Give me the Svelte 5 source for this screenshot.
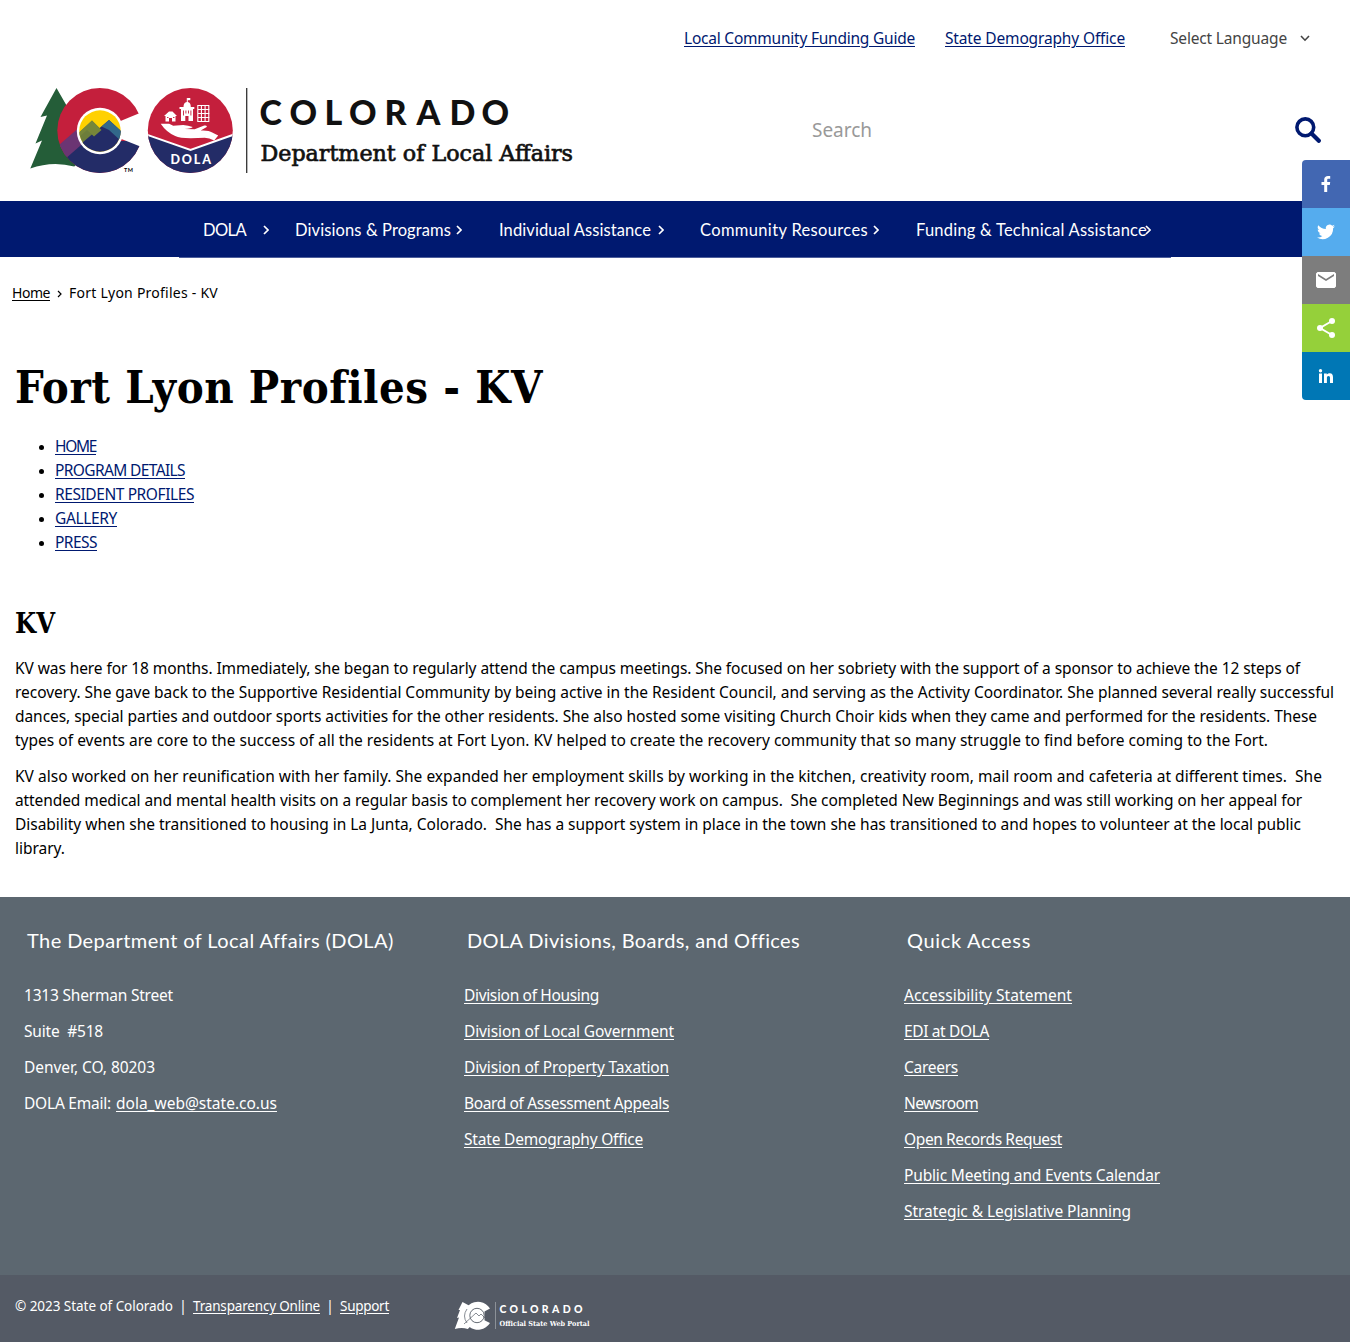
<script>
  // Spreads the letter spacing of a text run so that it spans the given width.
  function fit(node, width) {
    const range = document.createRange();
    range.selectNodeContents(node);
    const natural = range.getBoundingClientRect().width;
    node.style.letterSpacing = `${(width - natural) / node.textContent.length}px`;
  }

  const nav = [
    ['DOLA', 43, 'n1'],
    ['Divisions & Programs', 156, 'n2'],
    ['Individual Assistance', 152, 'n3'],
    ['Community Resources', 168, 'n4'],
    ['Funding & Technical Assistance', 231, 'n5']
  ];

  const pages = [
    ['HOME', 41],
    ['PROGRAM DETAILS', 130],
    ['RESIDENT PROFILES', 139],
    ['GALLERY', 62],
    ['PRESS', 42]
  ];

  const paragraphs = [
    [
      ['KV was here for 18 months. Immediately, she began to regularly attend the campus meetings. She focused on her sobriety with the support of a sponsor to achieve the 12 steps of', 1285],
      ['recovery. She gave back to the Supportive Residential Community by being active in the Resident Council, and serving as the Activity Coordinator. She planned several really successful', 1319],
      ['dances, special parties and outdoor sports activities for the other residents. She also hosted some visiting Church Choir kids when they came and performed for the residents. These', 1302],
      ['types of events are core to the success of all the residents at Fort Lyon. KV helped to create the recovery community that so many struggle to find before coming to the Fort.', 1253]
    ],
    [
      ['KV also worked on her reunification with her family. She expanded her employment skills by working in the kitchen, creativity room, mail room and cafeteria at different times.\u00a0 She', 1307],
      ['attended medical and mental health visits on a regular basis to complement her recovery work on campus.\u00a0 She completed New Beginnings and was still working on her appeal for', 1287],
      ['Disability when she transitioned to housing in La Junta, Colorado.\u00a0 She has a support system in place in the town she has transitioned to and hopes to volunteer at the local public', 1286],
      ['library.', 50]
    ]
  ];

  const address = [
    ['1313 Sherman Street', 149],
    ['Suite\u00a0 #518', 79],
    ['Denver, CO, 80203', 131]
  ];

  const divisions = [
    ['Division of Housing', 135],
    ['Division of Local Government', 210],
    ['Division of Property Taxation', 205],
    ['Board of Assessment Appeals', 205],
    ['State Demography Office', 179]
  ];

  const quick = [
    ['Accessibility Statement', 168],
    ['EDI at DOLA', 85],
    ['Careers', 54],
    ['Newsroom', 74],
    ['Open Records Request', 158],
    ['Public Meeting and Events Calendar', 256],
    ['Strategic & Legislative Planning', 227]
  ];
</script>

<div class="page">
  <header>
    <div class="topbar">
      <a href="#guide" use:fit={231}>Local Community Funding Guide</a>
      <a href="#demography" class="second" use:fit={180}>State Demography Office</a>
      <span class="language"><span use:fit={117}>Select Language</span>
        <svg width="10" height="7" viewBox="0 0 10 7"><path d="M1 1l4 4.2L9 1" fill="none" stroke="#444" stroke-width="1.6" /></svg>
      </span>
    </div>
    <div class="brand">
      <svg class="logo" width="570" height="110" viewBox="20 75 570 110">
        <defs>
          <clipPath id="disc"><circle cx="99.800" cy="130.500" r="42.500" /></clipPath>
          <clipPath id="sun"><circle cx="100" cy="131" r="20.700" /></clipPath>
          <clipPath id="seal"><circle cx="190.300" cy="130.500" r="42.500" /></clipPath>
        </defs>
        <path d="M56.500 88L40.500 117l6.500-1.500-11.500 28 6.500-3L30.300 168.500q22-8 44-2l12-12V118L68 108z" fill="#245d38" />
        <circle cx="99.800" cy="130.500" r="42.500" fill="#c41f3c" />
        <g clip-path="url(#disc)">
          <path d="M60 161.500L85 141h60v35H60z" fill="#232c67" />
          <path d="M56 147.500l22-19 6 14-19.500 17z" fill="#6b3573" />
        </g>
        <path d="M112 124.500l34-14v38.200l-34-13.500z" fill="#fff" />
        <circle cx="100" cy="131" r="23.200" fill="#fff" />
        <circle cx="100" cy="131" r="20.700" fill="#ffd100" />
        <g clip-path="url(#sun)">
          <path d="M76 135.500l16-15 9.500 9.500L87 142.500 76 152z" fill="#6d7d3b" />
          <path d="M76 148l33-28 16 14.500v22H76z" fill="#232c67" />
          <path d="M101.500 126.500l7.500-6.500 16 14.500v10l-16-14.500z" fill="#32688a" />
          <path d="M92 120.500l9.500 9.500-7.500 6.500-7-6.500-11 10v-5z" fill="#77863a" />
        </g>
        <text class="tm" x="124" y="172" textLength="9">TM</text>

        <circle cx="190.300" cy="130.500" r="42.500" fill="#c41f3c" />
        <g clip-path="url(#seal)">
          <path d="M145 134l45.500 16 45-16v45h-90z" fill="#232c67" />
          <path d="M145 134l45.500 16 45-16" fill="none" stroke="#fff" stroke-width="2" />
        </g>
        <path d="M160.700 123.700h8.500l4 2 10-.7q5 .3 9.500 2-1 1.500-8.500 2l10.500.3 9.500-3.800q3.500-.5 2.500 1.500l-6 3.500q8-.5 11.500 2l6 3-4 5q-5-2.500-9.500-2.700l-14 .4q-11 0-15.500-2.200-9-4-14.500-12.300z" fill="#fff" />
        <path d="M165.500 121.500V116H164l5-4.500h3.500l4.500 4.500h-1.500v5.500H172v-3.500h-3v3.500zM181 121v-12h-1.500v-2h4q0-4.500 3.300-5V98h1v4q3 .5 3 5h3.500v2H193v12h-4.500v-5h-3.200v5z" fill="#fff" />
        <path d="M187.300 98h3v2.200h-3z" fill="#fff" />
        <path d="M183.500 110.500v5m2.400-5v3m2.600-3v3m2.400-3v5M167 117.500h1.500m4.500 0h1.500" stroke="#c41f3c" stroke-width=".9" />
        <path d="M197.800 105.500h11v16h-11zM201.400 105v16.500M205.100 105v16.500M197.500 109.500h12M197.500 113.500h12M197.500 117.500h12" fill="none" stroke="#fff" stroke-width="1.100" />
        <text class="dola" x="170.500" y="164" textLength="40.500">DOLA</text>
        <path d="M246.700 88v85" stroke="#333" stroke-width="1.300" />
        <text class="state" y="125" x="259.500 289.500 324.500 349 384.500 416.500 449.500 481.500">COLORADO</text>
        <text class="dept" x="260.500" y="161" textLength="312.500" lengthAdjust="spacingAndGlyphs">Department of Local Affairs</text>
      </svg>
      <div class="search">
        <span use:fit={60}>Search</span>
        <svg width="26" height="26" viewBox="0 0 26 26"><circle cx="10.300" cy="10.300" r="8.400" fill="none" stroke="#001970" stroke-width="3.600" /><path d="M16.500 16.500l7.300 7.300" stroke="#001970" stroke-width="4.200" stroke-linecap="round" /></svg>
      </div>
    </div>
    <nav>
      {#each nav as [label, width, slot]}
        <a href="#menu" class={slot}><span use:fit={width}>{label}</span>
          <svg width="6" height="10" viewBox="0 0 6 10"><path d="M1 1l4 4-4 4" fill="none" stroke="#fff" stroke-width="1.700" /></svg>
        </a>
      {/each}
    </nav>
    <div class="navline"></div>
  </header>

  <aside>
    <a href="#facebook" class="facebook" aria-label="Facebook"><svg width="24" height="24" viewBox="0 0 24 24"><path d="M10.200 20v-7H7.500v-3h2.700V7.800C10.200 5.200 11.800 4 14 4h2.200v2.700H14.500c-1 0-1.300.5-1.300 1.400V10h3l-.4 3h-2.600v7z" /></svg></a>
    <a href="#twitter" class="twitter" aria-label="Twitter"><svg width="24" height="24" viewBox="0 0 24 24"><path d="M21 6.200c-.7.300-1.400.5-2.100.6.800-.5 1.300-1.200 1.600-2-.7.400-1.500.7-2.300.9a3.700 3.700 0 0 0-6.300 3.400C8.800 8.900 6.100 7.500 4.300 5.200a3.700 3.700 0 0 0 1.100 4.900c-.6 0-1.200-.2-1.700-.5 0 1.800 1.300 3.300 3 3.700-.6.100-1.100.2-1.700.1.500 1.500 1.800 2.500 3.400 2.600A7.400 7.400 0 0 1 3 17.500a10.500 10.500 0 0 0 16.100-9.300c.7-.5 1.400-1.200 1.900-2z" /></svg></a>
    <a href="#email" class="email" aria-label="Email"><svg width="24" height="24" viewBox="0 0 24 24"><path d="M3.500 4h17L22 5.500v13L20.500 20h-17L2 18.500v-13zM4 6v2l8 5 8-5V6l-8 5z" fill-rule="evenodd" /></svg></a>
    <a href="#share" class="share" aria-label="Share"><svg width="24" height="24" viewBox="0 0 24 24"><path d="M18 5L6 12l12 7" fill="none" stroke="#fff" stroke-width="2" /><circle cx="18" cy="5" r="3" /><circle cx="6" cy="12" r="3" /><circle cx="18" cy="19" r="3" /></svg></a>
    <a href="#linkedin" class="linkedin" aria-label="LinkedIn"><svg width="24" height="24" viewBox="0 0 24 24"><path d="M5 9.500h3V19H5zM6.500 5a1.700 1.700 0 1 1 0 3.400 1.700 1.700 0 0 1 0-3.400zM10 9.500h2.800v1.300c.6-1 1.600-1.500 2.900-1.500 2.700 0 3.300 1.700 3.300 4.200V19h-3v-4.900c0-1.200-.1-2.200-1.500-2.200s-1.600 1-1.600 2.200V19H10z" /></svg></a>
  </aside>

  <main>
    <div class="crumbs">
      <a href="#home" use:fit={38}>Home</a>
      <svg width="5" height="8" viewBox="0 0 5 8"><path d="M1 1l3 3-3 3" fill="none" stroke="#000" stroke-width="1.200" /></svg>
      <span use:fit={149}>Fort Lyon Profiles - KV</span>
    </div>
    <h1><span use:fit={528}>Fort Lyon Profiles - KV</span></h1>
    <ul>
      {#each pages as [label, width]}
        <li><a href="#page" use:fit={width}>{label}</a></li>
      {/each}
    </ul>
    <h2><span use:fit={40}>KV</span></h2>
    {#each paragraphs as lines}
      <p>
        {#each lines as [text, width]}
          <span class="line"><span use:fit={width}>{text}</span></span>
        {/each}
      </p>
    {/each}
  </main>

  <footer>
    <div class="columns">
      <section>
        <h3><span use:fit={366}>The Department of Local Affairs (DOLA)</span></h3>
        {#each address as [text, width]}
          <div class="row"><span use:fit={width}>{text}</span></div>
        {/each}
        <div class="row mail"><span use:fit={87}>DOLA Email:</span><a href="#mail" use:fit={161}>dola_web@state.co.us</a></div>
      </section>
      <section>
        <h3><span use:fit={332}>DOLA Divisions, Boards, and Offices</span></h3>
        {#each divisions as [text, width]}
          <div class="row"><a href="#division" use:fit={width}>{text}</a></div>
        {/each}
      </section>
      <section>
        <h3><span use:fit={124}>Quick Access</span></h3>
        {#each quick as [text, width]}
          <div class="row"><a href="#quick" use:fit={width}>{text}</a></div>
        {/each}
      </section>
    </div>
    <div class="legal">
      <span use:fit={158}>© 2023 State of Colorado</span><i>|</i>
      <a href="#transparency" use:fit={127}>Transparency Online</a><i>|</i>
      <a href="#support" use:fit={49}>Support</a>
      <svg class="portal" width="150" height="34" viewBox="0 0 150 34">
        <path d="M8.500 1L4.500 9l1.500 0-3 8 2-.5L.8 28q7-2 13 0l4-4V6z" fill="#fff" />
        <path d="M36 7.500A14 14 0 1 0 36 22l-5.500-2.800V10.400z" fill="#fff" />
        <circle cx="23" cy="14.500" r="7.200" fill="#fff" stroke="#545b65" stroke-width=".9" />
        <path d="M10 23l12-11 3 3 2-2 4 4M13 8q-5 7 0 14" fill="none" stroke="#545b65" stroke-width=".7" />
        <path d="M41.500 1v27" stroke="#9a9fa6" stroke-width=".8" />
        <text class="p1" x="45.500" y="12" textLength="83">COLORADO</text>
        <text class="p2" x="45.500" y="24.500" textLength="90" lengthAdjust="spacingAndGlyphs">Official State Web Portal</text>
      </svg>
    </div>
  </footer>
</div>

<style>
  :global(body) {
    margin: 0;
    background: #fff;
  }
  .page {
    height: 1343px;
    overflow: hidden;
    color: #000;
    font: 15.500px/24px 'Noto Sans', 'Open Sans', sans-serif;
    font-stretch: 87.5%;
    font-variant-ligatures: none;
    white-space: nowrap;
  }
  .topbar {
    display: flex;
    height: 75px;
    padding: 26px 40px 0 684px;
    box-sizing: border-box;
  }
  .topbar a {
    color: #001970;
    width: 231px;
  }
  .topbar .second {
    width: 180px;
    margin-left: 30px;
  }
  .language {
    display: flex;
    align-items: center;
    height: 24px;
    margin-left: 45px;
    width: 140px;
    justify-content: space-between;
    color: #444;
  }
  .brand {
    display: flex;
    height: 126px;
    padding-left: 20px;
  }
  .state {
    font: 900 34px Lato, sans-serif;
    fill: #111;
  }
  .dept {
    font: 22.500px 'DejaVu Serif', serif;
    fill: #111;
    stroke: #111;
    stroke-width: 0.7px;
  }
  .dola {
    font: 900 12.500px Lato, sans-serif;
    fill: #fff;
  }
  .tm {
    font: 700 5.500px Lato, sans-serif;
  }
  .search {
    display: flex;
    justify-content: space-between;
    align-items: center;
    width: 509px;
    height: 110px;
    margin-left: 222px;
    font-size: 19px;
    color: #999;
  }
  nav {
    display: flex;
    height: 56px;
    align-items: center;
    padding-left: 203px;
    background: #001970;
    font: 16.500px/24px Lato, sans-serif;
  }
  nav span {
    margin-top: 1px;
  }
  nav a {
    display: flex;
    align-items: center;
    justify-content: space-between;
    color: #fff;
    text-decoration: none;
  }
  nav svg {
    flex: none;
    margin-top: 1px;
  }
  .n1 { width: 66px; margin-right: 26px; }
  .n2 { width: 167px; margin-right: 37px; }
  .n3 { width: 165px; margin-right: 36px; }
  .n4 { width: 179px; margin-right: 37px; }
  .n5 { width: 235px; }
  .n5 svg { margin-left: -3px; }
  .navline {
    height: 1px;
    margin: 0 179px;
    background: #4d5e9b;
  }
  aside {
    position: absolute;
    top: 160px;
    right: 0;
    width: 48px;
    border-radius: 4px 0 0 4px;
    overflow: hidden;
  }
  aside a {
    display: flex;
    height: 48px;
    align-items: center;
    justify-content: center;
    fill: #fff;
  }
  .facebook { background: #4267b2; }
  .twitter { background: #55acee; }
  .email { background: #7d7d7d; }
  .share { background: #95d03a; }
  .linkedin { background: #0077b5; }
  main {
    height: 639px;
    padding: 0 15px;
  }
  .crumbs {
    display: flex;
    align-items: center;
    height: 24px;
    margin-left: -3px;
    padding-top: 23px;
    font-size: 14px;
  }
  .crumbs a {
    color: #000;
    width: 38px;
  }
  .crumbs svg {
    margin: 2px 7px 0;
  }
  h1, h2 {
    margin: 0;
    font-family: 'DejaVu Serif Condensed', 'DejaVu Serif', serif;
    font-stretch: condensed;
  }
  h1 {
    font-size: 45px;
    line-height: 58px;
    margin-top: 54px;
  }
  ul {
    margin: 17px 0 0;
    padding-left: 40px;
  }
  li::marker {
    font-size: 13px;
  }
  ul a {
    color: #001970;
  }
  h2 {
    margin-top: 52px;
    font-size: 27px;
    line-height: 36px;
  }
  p {
    margin: 14px 0 0;
  }
  p + p {
    margin-top: 12px;
  }
  .line {
    display: block;
  }
  footer {
    color: #fff;
    background: #5c6770;
  }
  footer a {
    color: #fff;
  }
  a {
    text-underline-offset: 2px;
  }
  .columns {
    display: grid;
    grid-template-columns: 440px 440px 440px;
    height: 378px;
    padding-left: 24px;
    box-sizing: border-box;
  }
  h3 {
    margin: 28px 0 31px 3px;
    font: 20px/30px Lato, sans-serif;
  }
  .row {
    height: 24px;
    margin-bottom: 12px;
  }
  .row:first-of-type {
    margin-top: -3px;
  }
  .mail {
    display: flex;
    gap: 5px;
  }
  .legal {
    display: flex;
    height: 67px;
    padding: 19px 15px 0;
    box-sizing: border-box;
    background: #545a65;
    font-size: 13.500px;
  }
  .legal i {
    width: 20px;
    text-align: center;
    font-style: normal;
  }
  .portal {
    margin: 7px 0 0 65px;
  }
  .p1 {
    font: 900 10.500px Lato, sans-serif;
    fill: #fff;
  }
  .p2 {
    font: bold 7px 'DejaVu Serif', serif;
    fill: #fff;
  }
</style>
